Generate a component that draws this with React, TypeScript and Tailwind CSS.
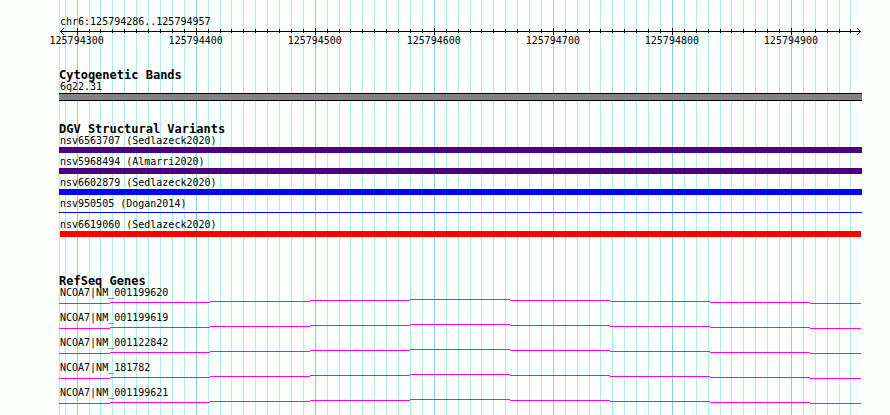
import type { ReactNode } from "react";

const START = 125794286;
const END = 125794958;
const MINOR = 10;
const MAJOR = 100;

const positions: number[] = [];
for (let bp = Math.ceil(START / MINOR) * MINOR; bp < END - MINOR / 2; bp += MINOR) {
  positions.push(bp);
}
const majors = positions.filter((bp) => bp % MAJOR === 0);

const place = (bp: number) => ({
  left: `calc(1px + ${((bp - START) / (END - START)) * 100}%)`,
});

const variants = [
  { name: "nsv6563707 (Sedlazeck2020)", bar: "h-[6px] bg-[#4b0082]" },
  { name: "nsv5968494 (Almarri2020)", bar: "h-[6px] bg-[#4b0082]" },
  { name: "nsv6602879 (Sedlazeck2020)", bar: "h-[6px] bg-[#0000ff]" },
  { name: "nsv950505 (Dogan2014)", bar: "mt-[2px] mb-[3px] h-px bg-[#0000ff]" },
  { name: "nsv6619060 (Sedlazeck2020)", bar: "ml-px mr-px h-[6px] bg-[#ff0000]" },
];

const genes = [
  "NCOA7|NM_001199620",
  "NCOA7|NM_001199619",
  "NCOA7|NM_001122842",
  "NCOA7|NM_181782",
  "NCOA7|NM_001199621",
];

// Height of each intron segment above the baseline, drawn as a shallow peak.
const steps = [
  "mt-1 grow basis-px",
  "mt-[3px] grow-2 basis-0",
  "mt-0.5 grow-2 basis-0",
  "mt-px grow-2 basis-0",
  "mt-0 grow-2 basis-0",
  "mt-px grow-2 basis-0",
  "mt-0.5 grow-2 basis-0",
  "mt-[3px] grow-2 basis-0",
  "mt-1 grow basis-px",
];

function Grid() {
  return (
    <div className="absolute inset-y-0 right-[31px] left-[59px]" aria-hidden="true">
      <div className="absolute inset-y-0 left-0 w-px bg-[#afeeee]" />
      {positions.map((bp) => (
        <div
          key={bp}
          className={`absolute inset-y-0 w-px ${bp % MAJOR === 0 ? "bg-[#87ceeb]" : "bg-[#afeeee]"}`}
          style={place(bp)}
        />
      ))}
    </div>
  );
}

function Ruler() {
  return (
    <div className="relative mr-[3px] h-5">
      <div className="absolute top-[3px] right-[-2px] left-px h-px bg-black" />
      <svg className="absolute top-0 left-px" width="4" height="7" viewBox="0 0 4 7" shapeRendering="crispEdges" aria-hidden="true">
        <path d="M3 0h1v1H3zM2 1h1v1H2zM1 2h1v1H1zM0 3h1v1H0zM1 4h1v1H1zM2 5h1v1H2zM3 6h1v1H3z" />
      </svg>
      <svg className="absolute top-0 right-[-2px]" width="4" height="7" viewBox="0 0 4 7" shapeRendering="crispEdges" aria-hidden="true">
        <path d="M0 0h1v1H0zM1 1h1v1H1zM2 2h1v1H2zM3 3h1v1H3zM2 4h1v1H2zM1 5h1v1H1zM0 6h1v1H0z" />
      </svg>
      {positions.slice(1).map((bp) => (
        <div
          key={bp}
          className={`absolute w-px bg-black ${bp % MAJOR === 0 ? "top-0 h-[7px]" : "top-px h-[4px]"}`}
          style={place(bp)}
        />
      ))}
      {majors.map((bp) => (
        <span key={bp} className="absolute top-[7px] -translate-x-1/2" style={place(bp)}>
          {bp}
        </span>
      ))}
    </div>
  );
}

function Track({ title, children }: { title: string; children: ReactNode }) {
  return (
    <section>
      <h2 className="text-[12px] leading-[12px] font-bold">{title}</h2>
      {children}
    </section>
  );
}

export default function App() {
  return (
    <main className="relative min-h-screen overflow-hidden bg-[#fcfefc] font-['DejaVu_Sans_Mono','Liberation_Mono',monospace] text-[10px] leading-[12px] whitespace-nowrap text-black">
      <Grid />
      <div className="relative pt-4 pr-[28px] pb-2 pl-[59px]">
        <p className="pl-px">chr6:125794286..125794957</p>
        <Ruler />
        <div className="flex flex-col pt-[21px]">
          <Track title="Cytogenetic Bands">
            <p className="pl-px">6q22.31</p>
            <div className="h-[8px] border-y border-black bg-[#848284]" />
          </Track>
          <div className="pt-[22px]">
            <Track title="DGV Structural Variants">
              <ul className="space-y-[3px]">
                {variants.map((v) => (
                  <li key={v.name}>
                    <p className="pl-px">{v.name}</p>
                    <div className="flex h-[6px] flex-col">
                      <div className={v.bar} />
                    </div>
                  </li>
                ))}
              </ul>
            </Track>
          </div>
          <div className="pt-[38px]">
            <Track title="RefSeq Genes">
              <ul className="space-y-2">
                {genes.map((g) => (
                  <li key={g}>
                    <p className="pl-px">{g}</p>
                    <div className="mr-px flex h-[5px] items-start">
                      {steps.map((s, i) => (
                        <div key={i} className={`h-px bg-[#ff00ff] ${s}`} />
                      ))}
                    </div>
                  </li>
                ))}
              </ul>
            </Track>
          </div>
        </div>
      </div>
    </main>
  );
}
